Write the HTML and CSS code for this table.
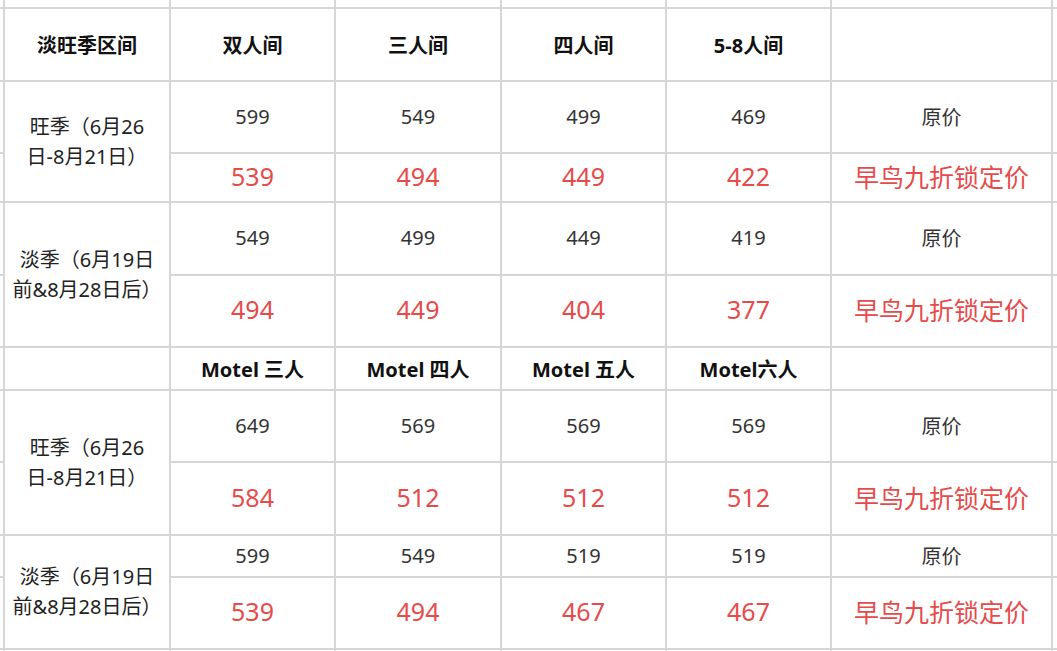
FILE: index.html
```html
<!DOCTYPE html>
<html lang="zh-CN">
<head>
<meta charset="utf-8">
<title>价格表</title>
<link rel="stylesheet" href="styles.css">
</head>
<body>
<div class="sheet">
  <!-- top edge row -->
  <div class="c"></div><div class="c"></div><div class="c"></div><div class="c"></div><div class="c"></div><div class="c"></div><div class="c"></div><div class="c"></div>

  <!-- header -->
  <div class="c"></div>
  <div class="c hd">淡旺季区间</div>
  <div class="c hd">双人间</div>
  <div class="c hd">三人间</div>
  <div class="c hd">四人间</div>
  <div class="c hd">5-8人间</div>
  <div class="c"></div>
  <div class="c"></div>

  <!-- group 1 -->
  <div class="c"></div>
  <div class="c season span2">旺季（6月26<br>日-8月21日）</div>
  <div class="c num">599</div>
  <div class="c num">549</div>
  <div class="c num">499</div>
  <div class="c num">469</div>
  <div class="c num">原价</div>
  <div class="c"></div>

  <div class="c"></div>
  <div class="c red">539</div>
  <div class="c red">494</div>
  <div class="c red">449</div>
  <div class="c red">422</div>
  <div class="c red">早鸟九折锁定价</div>
  <div class="c"></div>

  <!-- group 2 -->
  <div class="c"></div>
  <div class="c season span2">淡季（6月19日<br>前&amp;8月28日后）</div>
  <div class="c num">549</div>
  <div class="c num">499</div>
  <div class="c num">449</div>
  <div class="c num">419</div>
  <div class="c num">原价</div>
  <div class="c"></div>

  <div class="c"></div>
  <div class="c red">494</div>
  <div class="c red">449</div>
  <div class="c red">404</div>
  <div class="c red">377</div>
  <div class="c red">早鸟九折锁定价</div>
  <div class="c"></div>

  <!-- motel header -->
  <div class="c"></div>
  <div class="c"></div>
  <div class="c hd">Motel 三人</div>
  <div class="c hd">Motel 四人</div>
  <div class="c hd">Motel 五人</div>
  <div class="c hd">Motel六人</div>
  <div class="c"></div>
  <div class="c"></div>

  <!-- group 3 -->
  <div class="c"></div>
  <div class="c season span2">旺季（6月26<br>日-8月21日）</div>
  <div class="c num">649</div>
  <div class="c num">569</div>
  <div class="c num">569</div>
  <div class="c num">569</div>
  <div class="c num">原价</div>
  <div class="c"></div>

  <div class="c"></div>
  <div class="c red">584</div>
  <div class="c red">512</div>
  <div class="c red">512</div>
  <div class="c red">512</div>
  <div class="c red">早鸟九折锁定价</div>
  <div class="c"></div>

  <!-- group 4 -->
  <div class="c"></div>
  <div class="c season span2">淡季（6月19日<br>前&amp;8月28日后）</div>
  <div class="c num">599</div>
  <div class="c num">549</div>
  <div class="c num">519</div>
  <div class="c num">519</div>
  <div class="c num">原价</div>
  <div class="c"></div>

  <div class="c"></div>
  <div class="c red">539</div>
  <div class="c red">494</div>
  <div class="c red">467</div>
  <div class="c red">467</div>
  <div class="c red">早鸟九折锁定价</div>
  <div class="c"></div>

  <!-- bottom edge row -->
  <div class="c"></div><div class="c"></div><div class="c"></div><div class="c"></div><div class="c"></div><div class="c"></div><div class="c"></div><div class="c"></div>
</div>
</body>
</html>
```

FILE: styles.css
```css
html, body {
  margin: 0;
  padding: 0;
  background: #ffffff;
  overflow: hidden;
}

body {
  width: 1057px;
  height: 651px;
}

.sheet {
  display: grid;
  grid-template-columns: 3px 164px 163px 164px 163px 163px 219px 10px;
  grid-template-rows: 7px 71px 70px 47px 71px 70px 41px 70px 71px 40px 70px 10px;
  gap: 2px;
  background: #d6d6d6;
  width: max-content;
  font-family: "Noto Sans", "Noto Sans CJK SC", sans-serif;
  font-size: 20px;
  color: #333333;
}

.c {
  background: #ffffff;
  display: flex;
  align-items: center;
  justify-content: center;
  text-align: center;
  white-space: nowrap;
  overflow: hidden;
  box-sizing: border-box;
}

.span2 {
  grid-row: span 2;
}

.hd {
  font-weight: 700;
  color: #111111;
}

.num {
  color: #333333;
  padding-bottom: 2px;
}

.season {
  line-height: 30px;
  color: #222222;
  padding-bottom: 0;
}

.red {
  color: #e64b4b;
  font-size: 25px;
  padding-bottom: 4px;
}
```
